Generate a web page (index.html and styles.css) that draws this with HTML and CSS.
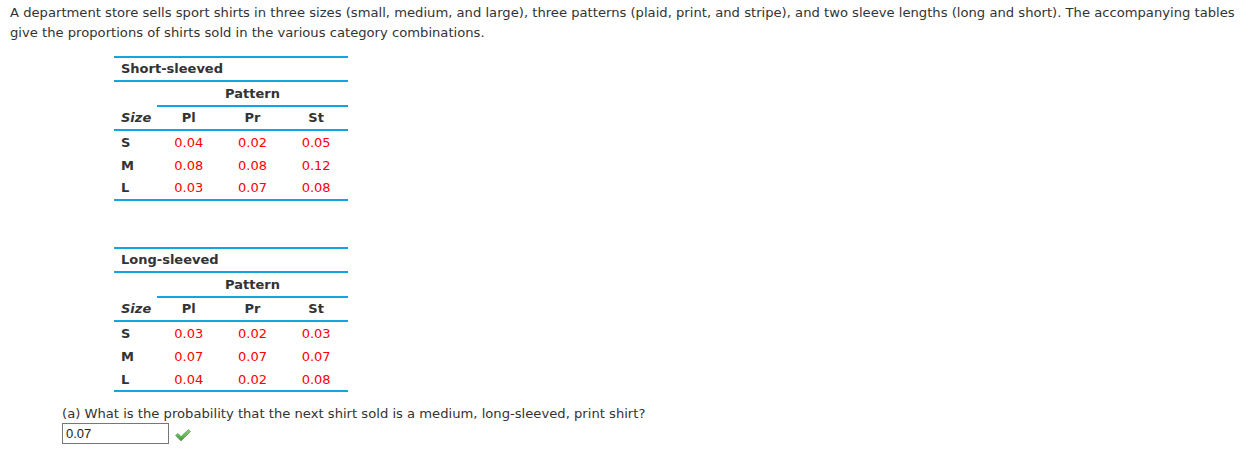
FILE: index.html
```html
<!DOCTYPE html>
<html>
<head>
<meta charset="utf-8">
<link rel="stylesheet" href="styles.css">
</head>
<body>
<div class="page">
  <p class="intro">A department store sells sport shirts in three sizes (small, medium, and large), three patterns (plaid, print, and stripe), and two sleeve lengths (long and short). The accompanying tables give the proportions of shirts sold in the various category combinations.</p>

  <div class="tables">
    <table class="prop">
      <tr class="title-row"><td colspan="4" class="title">Short-sleeved</td></tr>
      <tr class="pattern-row"><td class="blank"></td><td colspan="3" class="pattern">Pattern</td></tr>
      <tr class="head-row"><td class="size-h">Size</td><td>Pl</td><td>Pr</td><td>St</td></tr>
      <tr class="data"><td class="size">S</td><td>0.04</td><td>0.02</td><td>0.05</td></tr>
      <tr class="data"><td class="size">M</td><td>0.08</td><td>0.08</td><td>0.12</td></tr>
      <tr class="data last"><td class="size">L</td><td>0.03</td><td>0.07</td><td>0.08</td></tr>
    </table>

    <table class="prop second">
      <tr class="title-row"><td colspan="4" class="title">Long-sleeved</td></tr>
      <tr class="pattern-row"><td class="blank"></td><td colspan="3" class="pattern">Pattern</td></tr>
      <tr class="head-row"><td class="size-h">Size</td><td>Pl</td><td>Pr</td><td>St</td></tr>
      <tr class="data"><td class="size">S</td><td>0.03</td><td>0.02</td><td>0.03</td></tr>
      <tr class="data"><td class="size">M</td><td>0.07</td><td>0.07</td><td>0.07</td></tr>
      <tr class="data last"><td class="size">L</td><td>0.04</td><td>0.02</td><td>0.08</td></tr>
    </table>
  </div>

  <div class="question">
    <div class="q-text">(a) What is the probability that the next shirt sold is a medium, long-sleeved, print shirt?</div>
    <div class="answer">
      <span class="answer-box">0.07</span>
      <svg class="check" width="16" height="13" viewBox="0 0 16 13">
        <defs>
          <linearGradient id="g" x1="0" y1="0" x2="0" y2="1">
            <stop offset="0" stop-color="#8fd07a"/>
            <stop offset="1" stop-color="#3f9a3a"/>
          </linearGradient>
        </defs>
        <path d="M0.5 6.5 L3 4.5 L6 7.5 L13.5 0.5 L15.5 2.5 L6 12 Z" fill="url(#g)" stroke="#4a9a45" stroke-width="0.6" stroke-linejoin="round"/>
      </svg>
    </div>
  </div>
</div>
</body>
</html>
```

FILE: styles.css
```css
html, body {
  margin: 0;
  padding: 0;
  background: #ffffff;
}

.page {
  padding: 3px 10px 0 10px;
  font-family: "DejaVu Sans", Verdana, sans-serif;
  font-size: 13.15px;
  color: #333333;
}

.intro {
  margin: 0;
  line-height: 20px;
}

.tables {
  padding-left: 104px;
  margin-top: 13px;
}

.prop {
  border-collapse: collapse;
  width: 234px;
  font-size: 13px;
  color: #333333;
}

.prop.second {
  margin-top: 46px;
}

.prop td {
  padding: 0;
  text-align: center;
  height: 22px;
  line-height: 22px;
}

.prop td:first-child {
  width: 36px;
  padding-left: 7px;
  text-align: left;
}

.title-row td {
  border-top: 2px solid #14a5e0;
  border-bottom: 2px solid #14a5e0;
  font-weight: bold;
  height: 22px;
}

.pattern-row td {
  height: 23px;
  font-weight: bold;
}

.pattern-row td.pattern {
  border-bottom: 2px solid #14a5e0;
}

.head-row td {
  font-weight: bold;
  border-bottom: 2px solid #14a5e0;
  height: 22px;
}

.head-row td.size-h {
  font-style: italic;
}

.prop .data td {
  color: #ff0000;
  padding-top: 1px;
  height: 21.7px;
  line-height: 21.7px;
}

.prop .data td.size {
  color: #333333;
  font-weight: bold;
}

.data.last td {
  border-bottom: 2px solid #14a5e0;
}

.question {
  padding-left: 52px;
  margin-top: 12px;
}

.q-text {
  line-height: 20px;
}

.answer {
  display: flex;
  align-items: center;
  gap: 6px;
  margin-top: -1px;
}

.answer-box {
  display: block;
  box-sizing: border-box;
  width: 107px;
  height: 21px;
  border: 1px solid #777777;
  padding: 0 3px;
  font-family: "Liberation Sans", Arial, sans-serif;
  font-size: 13px;
  line-height: 19px;
  color: #222222;
}

.check {
  display: block;
  margin-top: 3px;
}
```
